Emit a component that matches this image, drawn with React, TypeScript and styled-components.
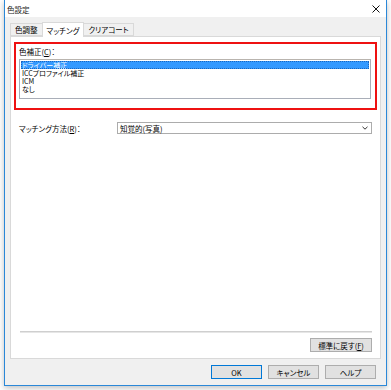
import React, { useState } from 'react';
import styled, { createGlobalStyle } from 'styled-components';

const GlobalStyle = createGlobalStyle`
  html, body {
    margin: 0;
    padding: 0;
    background: #ffffff;
  }
  body {
    font-family: "Noto Sans CJK JP", "Noto Sans", sans-serif;
    font-size: 7.5px;
    color: #000;
    font-feature-settings: "palt";
  }
`;

const Page = styled.div`
  padding: 0 4px 4px 4px;
  width: 391px;
  height: 390px;
  box-sizing: border-box;
`;

const Window = styled.div`
  width: 383px;
  height: 386px;
  box-sizing: border-box;
  border: 1px solid #2b88d8;
  border-top: none;
  background: #f0f0f0;
  display: flex;
  flex-direction: column;
  box-shadow: 0 2px 6px rgba(0, 0, 0, 0.25);
`;

const TitleBar = styled.div`
  height: 17px;
  flex: none;
  background: #ffffff;
  display: flex;
  align-items: center;
  justify-content: space-between;
  padding: 1px 6px 0 2px;
  box-sizing: border-box;
`;

const Title = styled.span`
  font-size: 7.5px;
  color: #222;
`;

const CloseIcon = styled.svg`
  width: 8px;
  height: 8px;
`;

const Body = styled.div`
  flex: 1;
  display: flex;
  flex-direction: column;
  padding: 5px 5px 0 5px;
  min-height: 0;
`;

const TabStrip = styled.div`
  display: flex;
  align-items: flex-end;
  height: 14px;
  position: relative;
  z-index: 1;
`;

const Tab = styled.div<{ active?: boolean }>`
  height: ${p => (p.active ? '15px' : '13px')};
  margin-bottom: ${p => (p.active ? '-1px' : '0')};
  padding: 0 4px;
  box-sizing: border-box;
  display: flex;
  align-items: center;
  background: ${p => (p.active ? '#ffffff' : '#f0f0f0')};
  border: 1px solid #d9d9d9;
  border-bottom: ${p => (p.active ? 'none' : '1px solid #d9d9d9')};
  margin-left: -1px;
  &:first-child {
    margin-left: 0;
  }
`;

const TabPanel = styled.div`
  flex: 1;
  background: #ffffff;
  border: 1px solid #d9d9d9;
  display: flex;
  flex-direction: column;
  padding: 5px 3px 6px 3px;
  min-height: 0;
`;

const HighlightBox = styled.div`
  border: 2px solid #ee1111;
  height: 68px;
  box-sizing: border-box;
  padding: 3px 4px 0 3px;
  display: flex;
  flex-direction: column;
`;

const Label = styled.div`
  line-height: 9px;
  margin-bottom: 3px;
`;

const ListBox = styled.div`
  height: 40px;
  box-sizing: border-box;
  border: 1px solid #a9aeb8;
  border-top-color: #b9b4ae;
  background: #fff;
  padding: 1px 1px;
`;

const ListItem = styled.div<{ selected?: boolean }>`
  line-height: 8px;
  height: 8px;
  font-size: 7px;
  padding-left: 1px;
  background: ${p => (p.selected ? '#3399ff' : 'transparent')};
  color: ${p => (p.selected ? '#ffffff' : '#000000')};
  outline: ${p => (p.selected ? '1px dotted #1a66c0' : 'none')};
  outline-offset: -1px;
  white-space: nowrap;
`;

const FieldRow = styled.div`
  display: flex;
  align-items: center;
  margin-top: 12px;
  padding: 0 5px;
`;

const FieldLabel = styled.div`
  width: 98px;
  flex: none;
`;

const Select = styled.div`
  flex: 1;
  height: 12px;
  box-sizing: border-box;
  border: 1px solid #acacac;
  background: #fff;
  display: flex;
  align-items: center;
  justify-content: space-between;
  padding: 0 3px 0 2px;
`;

const Chevron = styled.svg`
  width: 6px;
  height: 4px;
`;

const Spacer = styled.div`
  flex: 1;
`;

const Separator = styled.div`
  height: 1px;
  background: #cfcfcf;
  border-bottom: 1px solid #e6e6e6;
  margin: 0 5px 0 6px;
`;

const ResetRow = styled.div`
  display: flex;
  justify-content: flex-end;
  padding: 5px 5px 0 0;
`;

const Button = styled.div<{ primary?: boolean; w: number }>`
  width: ${p => p.w}px;
  height: 14px;
  box-sizing: border-box;
  background: #e1e1e1;
  border: 1px solid ${p => (p.primary ? '#0078d7' : '#adadad')};
  display: flex;
  align-items: center;
  justify-content: center;
  font-size: 7.5px;
`;

const Footer = styled.div`
  height: 26px;
  flex: none;
  display: flex;
  justify-content: flex-end;
  align-items: flex-start;
  gap: 6px;
  padding: 6px 5px 0 0;
  box-sizing: border-box;
`;

const items = ['ドライバー補正', 'ICCプロファイル補正', 'ICM', 'なし'];

const App: React.FC = () => {
  const [selected] = useState(0);

  return (
    <Page>
      <GlobalStyle />
      <Window>
        <TitleBar>
          <Title>色設定</Title>
          <CloseIcon viewBox="0 0 8 8">
            <path d="M0.5 0.5 L7.5 7.5 M7.5 0.5 L0.5 7.5" stroke="#111" strokeWidth="1" />
          </CloseIcon>
        </TitleBar>
        <Body>
          <TabStrip>
            <Tab>色調整</Tab>
            <Tab active>マッチング</Tab>
            <Tab>クリアコート</Tab>
          </TabStrip>
          <TabPanel>
            <HighlightBox>
              <Label>色補正(<u>C</u>)：</Label>
              <ListBox>
                {items.map((item, i) => (
                  <ListItem key={item} selected={i === selected}>
                    {item}
                  </ListItem>
                ))}
              </ListBox>
            </HighlightBox>
            <FieldRow>
              <FieldLabel>マッチング方法(<u>R</u>)：</FieldLabel>
              <Select>
                <span>知覚的(写真)</span>
                <Chevron viewBox="0 0 6 4">
                  <path d="M0.5 0.8 L3 3.2 L5.5 0.8" stroke="#333" strokeWidth="1" fill="none" />
                </Chevron>
              </Select>
            </FieldRow>
            <Spacer />
            <Separator />
            <ResetRow>
              <Button w={62}>標準に戻す(<u>F</u>)</Button>
            </ResetRow>
          </TabPanel>
          <Footer>
            <Button primary w={51}>OK</Button>
            <Button w={51}>キャンセル</Button>
            <Button w={51}>ヘルプ</Button>
          </Footer>
        </Body>
      </Window>
    </Page>
  );
};

export default App;
